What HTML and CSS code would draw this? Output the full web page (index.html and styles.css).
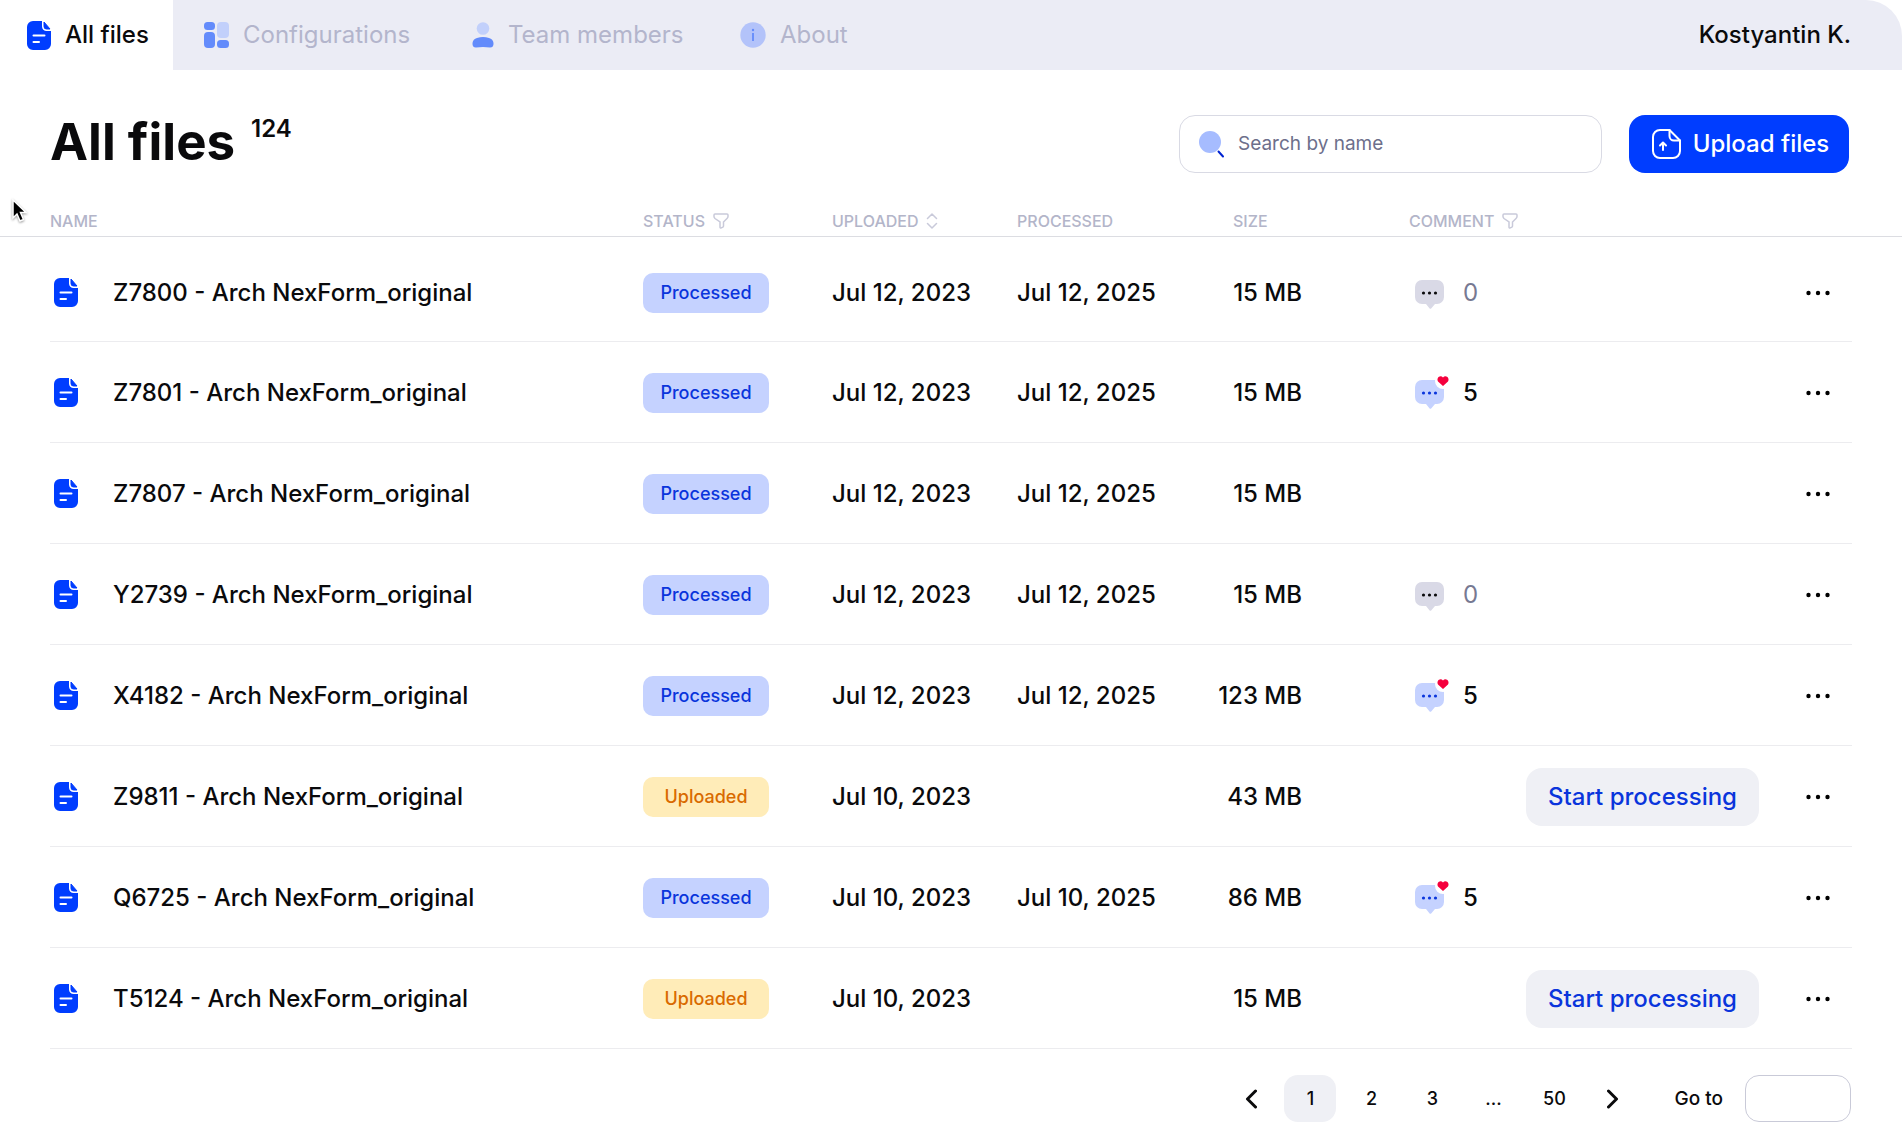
FILE: index.html
```html
<!DOCTYPE html>
<html lang="en">
<head>
<meta charset="utf-8">
<title>All files</title>
<link rel="stylesheet" href="styles.css">
</head>
<body>
<svg class="sprite" aria-hidden="true">
  <symbol id="file" viewBox="0 0 24 29">
    <path d="M6 0h9v5.500a4.500 4.500 0 0 0 4.500 4.500H24v13a6 6 0 0 1-6 6H6a6 6 0 0 1-6-6V6a6 6 0 0 1 6-6Z" fill="#003dff"/>
    <path d="M17 1l6 7h-3.500A2.500 2.500 0 0 1 17 5.500Z" fill="#003dff" stroke="#003dff" stroke-linejoin="round"/>
    <path d="M6.500 14.500h11M6.500 21h5.500" stroke="#fff" stroke-width="2" stroke-linecap="round"/>
  </symbol>
  <symbol id="funnel" viewBox="0 0 16 16">
    <path d="M2 1h12q1 0 1 1v1.500q0 1-1 2L10.500 9v4q0 .8-.6 1.100l-1.600.8q-1.300.5-1.300-.9V9L2 5.500q-1-1-1-2V2q0-1 1-1Z" fill="none" stroke="#c9cada" stroke-width="1.500"/>
  </symbol>
  <symbol id="chat" viewBox="0 0 34 35">
    <path d="M7 5h15a7 7 0 0 1 7 7v10a7 7 0 0 1-7 7h-2l-3.600 4.200q-1 1-2 0L11 29H7a7 7 0 0 1-7-7V12a7 7 0 0 1 7-7Z" fill="currentColor"/>
  </symbol>
  <symbol id="dots" viewBox="0 0 24 6">
    <circle cx="2.500" cy="3" r="2.200"/><circle cx="12" cy="3" r="2.200"/><circle cx="21.500" cy="3" r="2.200"/>
  </symbol>
</svg>

<header class="topbar">
  <nav class="tabs" aria-label="Main">
    <a class="tab tab-current" href="#files"><svg class="tab-icon" width="24" height="29"><use href="#file"/></svg>All files</a>
    <a class="tab" href="#configurations"><svg class="tab-icon" width="25" height="26" viewBox="0 0 25 26"><rect width="11" height="8" rx="3.500" fill="#638bfb"/><rect y="10" width="11" height="16" rx="4" fill="#638bfb"/><rect x="13" width="12" height="16" rx="4" fill="#c2d0fb"/><rect x="13" y="18" width="12" height="8" rx="3.500" fill="#638bfb"/></svg>Configurations</a>
    <a class="tab" href="#team"><svg class="tab-icon" width="22" height="26" viewBox="0 0 22 26"><circle cx="11" cy="6.500" r="6.300" fill="#c2d0fb"/><path d="M5 16q6-2 12 0 4 1 4.500 5 .3 4.500-3.500 4.500-7-1-14 0-3.800 0-3.500-4.500Q1 17 5 16Z" fill="#638bfb"/></svg>Team members</a>
    <a class="tab" href="#about"><svg class="tab-icon" width="26" height="26" viewBox="0 0 26 26"><circle cx="13" cy="13" r="12.700" fill="#b3c3fa"/><path d="M13 11v8" stroke="#638bfb" stroke-width="1.800"/><circle cx="13" cy="8" r="1.200" fill="#638bfb"/></svg>About</a>
  </nav>
  <span class="user">Kostyantin K.</span>
</header>

<main>
  <div class="heading">
    <h1 class="title">All files</h1>
    <span class="count">124</span>
    <label class="search">
      <svg width="28" height="28" viewBox="0 0 28 28" aria-hidden="true"><circle cx="12" cy="12" r="11" fill="#a6bcff"/><path d="M20.500 21.500l4.500 5" stroke="#0023d1" stroke-width="2" stroke-linecap="round"/></svg>
      <input class="search-input" type="search" placeholder="Search by name" aria-label="Search by name">
    </label>
    <button class="upload" type="button">
      <svg width="29" height="30" viewBox="0 0 29 30" fill="none" stroke="#fff" stroke-width="2" stroke-linecap="round" stroke-linejoin="round"><path d="M17.500 1H8a7 7 0 0 0-7 7v14a7 7 0 0 0 7 7h13a7 7 0 0 0 7-7V11.500Z"/><path d="M17.500 1v6a4.500 4.500 0 0 0 4.500 4.500h6M11 21v-7M8 16.500l3-3 3 3"/></svg>
      Upload files
    </button>
  </div>

  <table class="files">
    <colgroup><col><col class="c-status"><col class="c-date"><col class="c-date"><col class="c-size"><col class="c-comment"><col class="c-actions"></colgroup>
    <thead>
      <tr>
        <th class="name">NAME</th>
        <th><span class="label">STATUS <svg width="16" height="16"><use href="#funnel"/></svg></span></th>
        <th><span class="label">UPLOADED <svg width="12" height="16" viewBox="0 0 12 16" fill="none" stroke="#c9cada" stroke-width="1.500" stroke-linecap="round" stroke-linejoin="round"><path d="M1.500 5.500L6 1l4.500 4.500M1.500 10.500L6 15l4.500-4.500"/></svg></span></th>
        <th>PROCESSED</th>
        <th class="size-head">SIZE</th>
        <th class="comment-head"><span class="label">COMMENT <svg width="16" height="16"><use href="#funnel"/></svg></span></th>
        <th></th>
      </tr>
    </thead>
    <tbody id="rows"></tbody>
  </table>

  <nav class="pager" aria-label="Pages">
    <button class="page arrow" type="button" aria-label="Previous page"><svg width="12" height="20" viewBox="0 0 12 20"><path d="M10.500 2L2.500 10l8 8"/></svg></button>
    <button class="page page-current" type="button">1</button>
    <button class="page" type="button">2</button>
    <button class="page" type="button">3</button>
    <span class="page">...</span>
    <button class="page" type="button">50</button>
    <button class="page arrow" type="button" aria-label="Next page"><svg width="12" height="20" viewBox="0 0 12 20"><path d="M1.500 2l8 8-8 8"/></svg></button>
    <label class="goto">Go to <input class="goto-input" type="text"></label>
  </nav>
</main>
<svg class="pointer" width="18" height="26" viewBox="0 0 18 26" aria-hidden="true"><path d="M3 2v18l4-4 3 7 3.500-1.500-3-7H16Z" fill="#000" stroke="#fff" stroke-width="1.500"/></svg>
<script src="files.js"></script>
</body>
</html>
```
FILE: styles.css
```css
* { box-sizing: border-box; }

body {
  margin: 0;
  background: #fff;
  color: #0a0a0c;
  font: 500 24px/32px Inter, "Liberation Sans", sans-serif;
}

button, input { font: inherit; color: inherit; }
button { border: 0; padding: 0; background: none; cursor: pointer; }
svg { flex: none; display: block; }
.sprite { position: absolute; width: 0; height: 0; }

/* Top bar */
.topbar {
  display: flex;
  align-items: center;
  justify-content: space-between;
  height: 70px;
  padding-right: 51px;
  background: #ebecf5;
  border-top-right-radius: 36px;
}
.tabs { display: grid; grid-template-columns: 173px 268px 268px auto; height: 100%; }
.tab {
  display: flex;
  align-items: center;
  padding-left: 31px;
  gap: 14px;
  color: #b3b5cc;
  font-weight: 400;
  text-decoration: none;
  white-space: nowrap;
}
.tab-current { padding-left: 27px; background: #fff; color: #0a0a0c; font-weight: 500; }

/* Page heading */
.heading {
  display: flex;
  align-items: center;
  height: 58px;
  margin: 45px 53px 0 50px;
}
.title { margin: 0; font-size: 51px; line-height: 54px; font-weight: 700; align-self: flex-start; }
.count { align-self: flex-start; margin-left: 16px; line-height: 28px; font-weight: 600; }
.search {
  display: flex;
  align-items: center;
  gap: 12px;
  width: 423px;
  height: 58px;
  margin: 0 27px 0 auto;
  padding: 0 18px;
  border: 1px solid #d9dae4;
  border-radius: 16px;
}
.search-input { flex: 1; min-width: 0; border: 0; padding: 0; outline: 0; background: none; font-size: 19px; }
.search-input::placeholder { color: #6d6f8b; opacity: 1; font-weight: 400; }
.upload {
  display: flex;
  align-items: center;
  justify-content: center;
  gap: 12px;
  width: 220px;
  height: 58px;
  padding-left: 3px;
  border-radius: 16px;
  background: #003dff;
  color: #fff;
  white-space: nowrap;
}

/* Files table */
.files { width: 100%; margin-top: 32px; table-layout: fixed; border-collapse: separate; border-spacing: 0; }
.c-status { width: 189px; }
.c-date { width: 185px; }
.c-size { width: 100px; }
.c-comment { width: 208px; }
.c-actions { width: 392px; }
.files th {
  height: 32px;
  padding: 0;
  border-bottom: 1px solid #dcdde2;
  color: #b3b5c9;
  font-size: 16px;
  line-height: 20px;
  font-weight: 500;
  text-align: left;
}
.files td { height: 101px; padding: 0; white-space: nowrap; }
.files tbody tr:first-child td { height: 105px; padding-top: 6px; }
.files tbody tr { background: linear-gradient(#ececef, #ececef) 50% 100% / calc(100% - 100px) 1px no-repeat; }
.files .name { padding-left: 50px; }
.files .size-head { padding-left: 31px; }
.files .comment-head { padding-left: 107px; }
.files .size { text-align: right; }
.files .comment { padding-left: 113px; }
.label { display: flex; align-items: center; gap: 8px; }
.file { display: flex; align-items: center; gap: 35px; padding-left: 4px; }
.status {
  display: block;
  width: 126px;
  border-radius: 10px;
  background: #c5d2ff;
  color: #0a35dc;
  font-size: 18px;
  line-height: 40px;
  text-align: center;
}
.status-uploaded { background: #ffecb8; color: #d96a00; }
.comments { display: flex; align-items: center; gap: 14px; color: #0a0a0c; }
.comments-none { color: #777992; font-weight: 400; }
.chat { color: #c5d2ff; }
.comments-none .chat { color: #d9d9e6; }
.actions { display: flex; align-items: center; justify-content: flex-end; gap: 47px; padding-right: 72px; }
.start { width: 233px; height: 58px; border-radius: 16px; background: #eff0f5; color: #0a35dc; }

/* Pagination */
.pager {
  display: flex;
  align-items: center;
  justify-content: flex-end;
  gap: 9px;
  margin: 26px 51px 0 0;
  font-size: 18px;
}
.page { width: 52px; height: 47px; border-radius: 14px; line-height: 47px; text-align: center; }
.page-current { background: #eff0f5; }
.arrow { display: flex; align-items: center; justify-content: center; width: 48px; }
.arrow svg { fill: none; stroke: #0a0a0c; stroke-width: 3; stroke-linecap: round; stroke-linejoin: round; }
.goto { display: flex; align-items: center; gap: 22px; margin-left: 28px; font-size: 19px; }
.goto-input { width: 106px; height: 47px; border: 1px solid #c9cad8; border-radius: 14px; background: #fff; padding: 0 14px; }

.pointer { position: absolute; left: 10px; top: 198px; filter: drop-shadow(0 1px 1px #0006); }
```
FILE: files.js
```js
const files = [
  ["Z7800", "Processed", "Jul 12, 2023", "Jul 12, 2025", "15 MB", 0],
  ["Z7801", "Processed", "Jul 12, 2023", "Jul 12, 2025", "15 MB", 5],
  ["Z7807", "Processed", "Jul 12, 2023", "Jul 12, 2025", "15 MB", null],
  ["Y2739", "Processed", "Jul 12, 2023", "Jul 12, 2025", "15 MB", 0],
  ["X4182", "Processed", "Jul 12, 2023", "Jul 12, 2025", "123 MB", 5],
  ["Z9811", "Uploaded", "Jul 10, 2023", "", "43 MB", null],
  ["Q6725", "Processed", "Jul 10, 2023", "Jul 10, 2025", "86 MB", 5],
  ["T5124", "Uploaded", "Jul 10, 2023", "", "15 MB", null],
];

const heart = '<circle cx="28" cy="6" r="8" fill="#fff"/><path d="M28 11L23 6.500Q21.700 4 23.500 2 26 .2 28 2.400 30 .2 32.500 2 34.300 4 33 6.500Z" fill="#f5003d"/>';

function comments(count) {
  if (count === null) return "";
  const dot = count ? "#0a35dc" : "#0a0a0c";
  return `<span class="comments ${count ? "" : "comments-none"}">
    <svg class="chat" width="34" height="35" viewBox="0 0 34 35"><use href="#chat"/>
    <g fill="${dot}"><circle cx="8.500" cy="18" r="1.600"/><circle cx="14.500" cy="18" r="1.600"/><circle cx="20.500" cy="18" r="1.600"/></g>${count ? heart : ""}</svg>${count}</span>`;
}

document.getElementById("rows").innerHTML = files.map(([id, status, uploaded, processed, size, count]) => `
  <tr>
    <td class="name"><span class="file"><svg width="24" height="29"><use href="#file"/></svg>${id} - Arch NexForm_original</span></td>
    <td><span class="status status-${status.toLowerCase()}">${status}</span></td>
    <td>${uploaded}</td>
    <td>${processed}</td>
    <td class="size">${size}</td>
    <td class="comment">${comments(count)}</td>
    <td><span class="actions">${status === "Uploaded" ? '<button class="start" type="button">Start processing</button>' : ""}
      <button type="button" aria-label="More actions"><svg width="24" height="6"><use href="#dots"/></svg></button></span></td>
  </tr>`).join("");
```
